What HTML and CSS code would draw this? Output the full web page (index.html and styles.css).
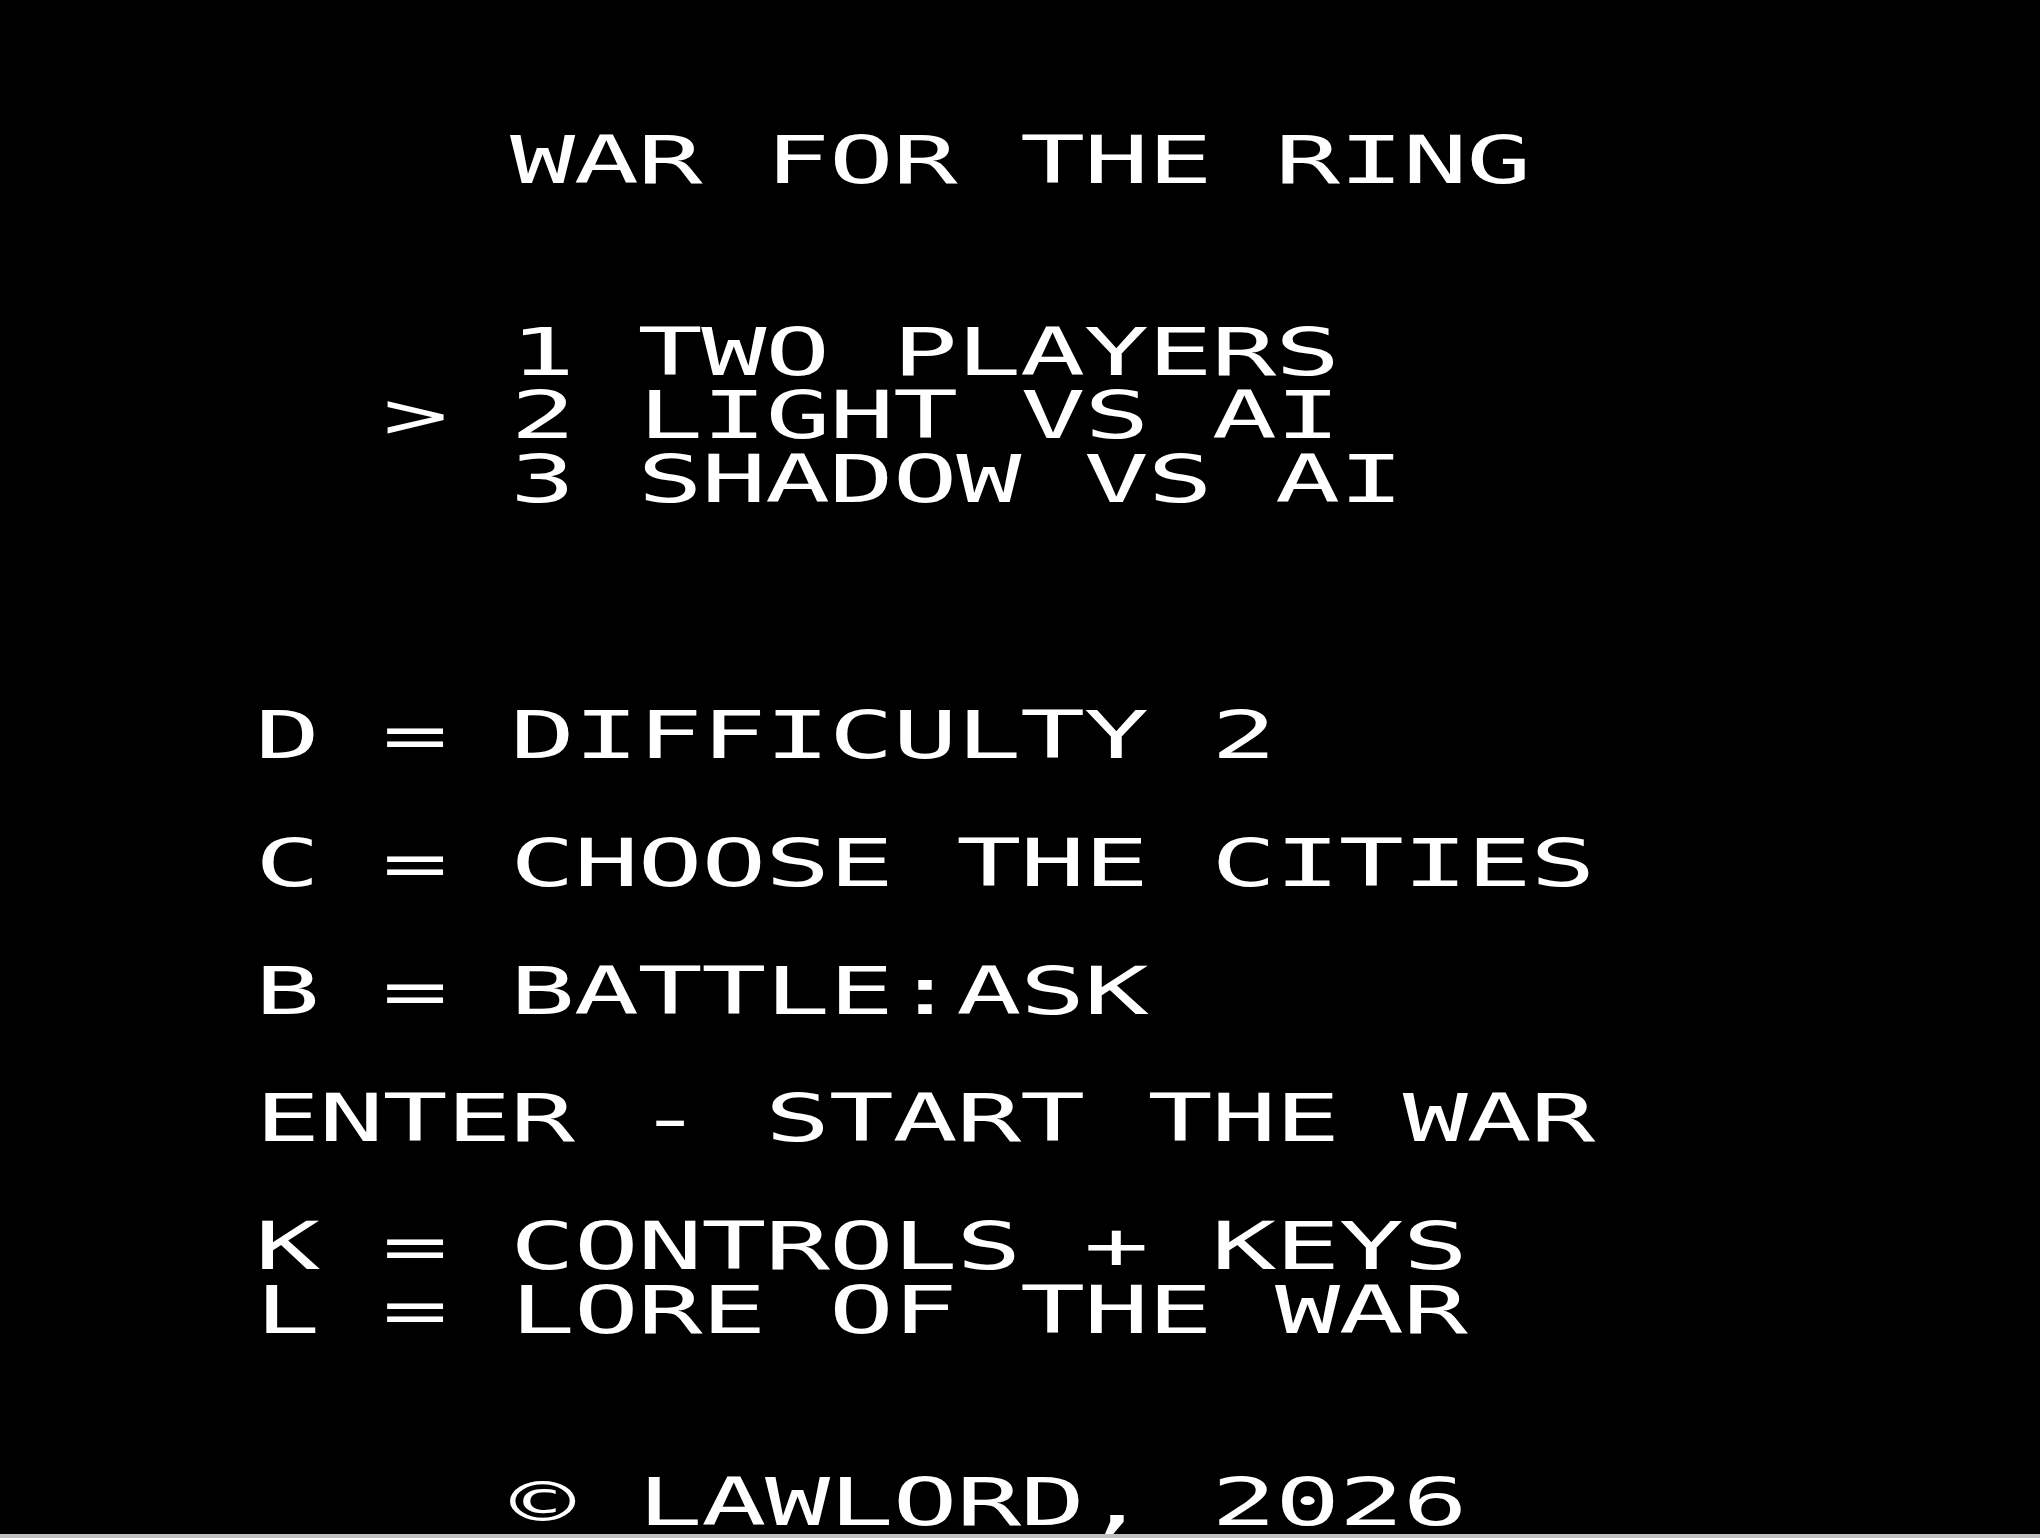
FILE: index.html
```html
<!DOCTYPE html>
<html lang="en">
<head>
<meta charset="utf-8">
<title>War for the Ring</title>
<link rel="stylesheet" href="styles.css">
</head>
<body>
<main class="screen">
  <div class="row"></div>
  <div class="row"></div>
  <div class="row c8"><span class="txt">WAR FOR THE RING</span></div>
  <div class="row"></div>
  <div class="row"></div>
  <div class="row c8"><span class="txt">1 TWO PLAYERS</span></div>
  <div class="row c6"><span class="txt">&gt; 2 LIGHT VS AI</span></div>
  <div class="row c8"><span class="txt">3 SHADOW VS AI</span></div>
  <div class="row"></div>
  <div class="row"></div>
  <div class="row"></div>
  <div class="row c4"><span class="txt">D = DIFFICULTY 2</span></div>
  <div class="row"></div>
  <div class="row c4"><span class="txt">C = CHOOSE THE CITIES</span></div>
  <div class="row"></div>
  <div class="row c4"><span class="txt">B = BATTLE:ASK</span></div>
  <div class="row"></div>
  <div class="row c4"><span class="txt">ENTER - START THE WAR</span></div>
  <div class="row"></div>
  <div class="row c4"><span class="txt">K = CONTROLS + KEYS</span></div>
  <div class="row c4"><span class="txt">L = LORE OF THE WAR</span></div>
  <div class="row"></div>
  <div class="row"></div>
  <div class="row c8"><span class="txt">© LAWLORD, 2026</span></div>
</main>
</body>
</html>
```

FILE: styles.css
```css
html, body {
  margin: 0;
  padding: 0;
  background: #c0c0c0;
  overflow: hidden;
}

.screen {
  width: 2040px;
  height: 1534px;
  background: #000;
  display: grid;
  grid-template-rows: repeat(24, 63.917px);
  overflow: hidden;
}

.row {
  height: 63.917px;
  line-height: 63.917px;
  white-space: pre;
  color: #fff;
  font-family: "DejaVu Sans Mono", "Liberation Mono", monospace;
  font-size: 65.6px;
}

.c4 { padding-left: 255px; }
.c6 { padding-left: 382.5px; }
.c8 { padding-left: 510px; }

.txt {
  display: inline-block;
  letter-spacing: -0.85px;
  transform-origin: left top;
  transform: translateY(1.2px) scaleX(1.65);
}
```
